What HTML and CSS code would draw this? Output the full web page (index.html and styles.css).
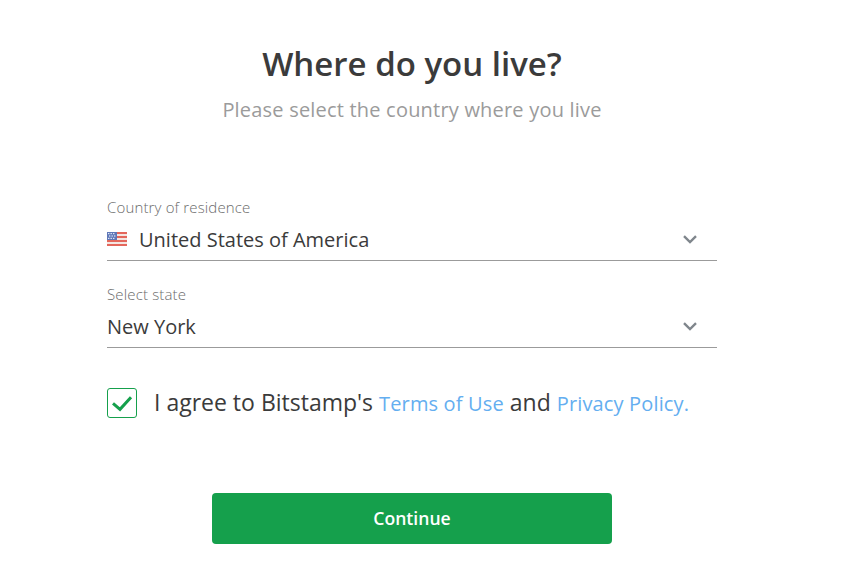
FILE: index.html
```html
<!DOCTYPE html>
<html lang="en">
<head>
<meta charset="utf-8">
<title>Where do you live?</title>
<link rel="stylesheet" href="styles.css">
</head>
<body>
<main class="page">
  <h1 class="title">Where do you live?</h1>
  <p class="subtitle">Please select the country where you live</p>
  <form class="form">
    <div class="field">
      <div class="field-label">Country of residence</div>
      <div class="field-control">
        <svg class="flag" viewBox="0 0 20 14" aria-hidden="true">
          <rect width="20" height="14" fill="#f4e6e2"/>
          <g fill="#e4675c"><rect width="20" height="2" y="0"/><rect width="20" height="2" y="4"/><rect width="20" height="2" y="8"/><rect width="20" height="2" y="12"/></g>
          <rect width="10" height="8" fill="#5f78b8"/>
          <g fill="#dfe6f4"><rect x="1" y="1" width="1.4" height="1.2"/><rect x="3.5" y="1" width="1.4" height="1.2"/><rect x="6" y="1" width="1.4" height="1.2"/><rect x="2" y="3.4" width="1.4" height="1.2"/><rect x="4.5" y="3.4" width="1.4" height="1.2"/><rect x="7" y="3.4" width="1.4" height="1.2"/><rect x="1" y="5.8" width="1.4" height="1.2"/><rect x="3.5" y="5.8" width="1.4" height="1.2"/><rect x="6" y="5.8" width="1.4" height="1.2"/></g>
        </svg>
        <span class="field-value">United States of America</span>
        <svg class="chevron" viewBox="0 0 14 9" aria-hidden="true"><path d="M1 1.2 7 7l6-5.8"/></svg>
      </div>
    </div>
    <div class="field">
      <div class="field-label">Select state</div>
      <div class="field-control">
        <span class="field-value">New York</span>
        <svg class="chevron" viewBox="0 0 14 9" aria-hidden="true"><path d="M1 1.2 7 7l6-5.8"/></svg>
      </div>
    </div>
    <div class="agree">
      <span class="checkbox">
        <svg viewBox="0 0 28 28" aria-hidden="true"><path d="M5 14.3 12 20.3 23 8.3"/></svg>
      </span>
      <span class="agree-text">I agree to Bitstamp's <a class="link" href="#">Terms of Use</a> and <a class="link" href="#">Privacy Policy.</a></span>
    </div>
    <button class="continue" type="button">Continue</button>
  </form>
</main>
</body>
</html>
```
FILE: styles.css
```css
html, body {
  margin: 0;
  padding: 0;
  background: #fff;
}
body {
  font-family: "Open Sans", "Noto Sans", sans-serif;
  color: #3b3b3b;
}
.page {
  width: 610px;
  margin-left: 107px;
  display: flex;
  flex-direction: column;
}
.title {
  margin: 41px 0 0;
  font-size: 33px;
  line-height: 46px;
  font-weight: 600;
  text-align: center;
  color: #3b3b3b;
}
.subtitle {
  margin: 10px 0 0;
  font-size: 20px;
  line-height: 26px;
  letter-spacing: 0.2px;
  text-align: center;
  color: #9b9b9b;
}
.form {
  margin-top: 75px;
  display: flex;
  flex-direction: column;
}
.field {
  height: 62px;
  margin-bottom: 24px;
  border-bottom: 1px solid #9b9b9b;
}
.field:nth-child(2) {
  margin-bottom: 0;
}
.field-label {
  font-size: 15px;
  line-height: 19px;
  font-weight: 300;
  letter-spacing: 0.15px;
  color: #6b6b6b;
}
.field-control {
  display: flex;
  align-items: center;
  margin-top: 9px;
  height: 28px;
}
.flag {
  width: 20px;
  height: 14px;
  margin: 0 12px 2px 0;
  flex: none;
}
.field-value {
  flex: 1;
  font-size: 20px;
  line-height: 28px;
  color: #3b3b3b;
}
.chevron {
  width: 14px;
  height: 9px;
  margin: 0 20px 2px 0;
  flex: none;
}
.chevron path {
  fill: none;
  stroke: #7f868c;
  stroke-width: 2.4;
}
.agree {
  display: flex;
  align-items: center;
  margin-top: 39px;
}
.checkbox {
  width: 28px;
  height: 28px;
  flex: none;
  border: 1px solid #15a04c;
  border-radius: 3px;
  display: flex;
  margin-right: 17px;
}
.checkbox svg {
  width: 28px;
  height: 28px;
}
.checkbox path {
  fill: none;
  stroke: #15a04c;
  stroke-width: 3;
}
.agree-text {
  font-size: 23px;
  line-height: 30px;
  color: #3b3b3b;
  white-space: nowrap;
}
.link {
  font-size: 20px;
  letter-spacing: 0.15px;
  color: #64aef0;
  text-decoration: none;
}
.continue {
  align-self: center;
  width: 400px;
  height: 51px;
  margin-top: 74px;
  padding: 0 0 2px;
  border: 0;
  border-radius: 4px;
  background: #15a04c;
  color: #fff;
  font-family: inherit;
  font-size: 17.6px;
  font-weight: 600;
}
```
